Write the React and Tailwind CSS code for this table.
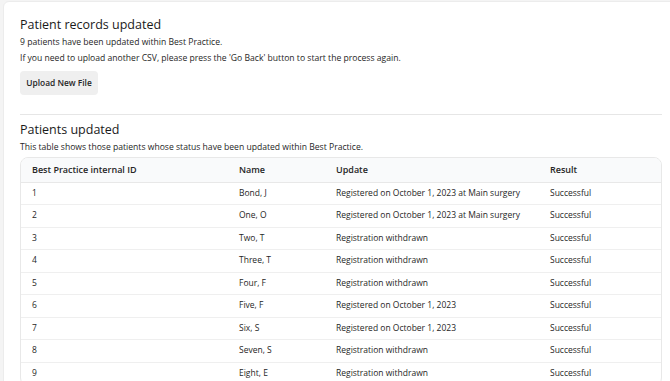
const rows = [
  ["1", "Bond, J", "Registered on October 1, 2023 at Main surgery"],
  ["2", "One, O", "Registered on October 1, 2023 at Main surgery"],
  ["3", "Two, T", "Registration withdrawn"],
  ["4", "Three, T", "Registration withdrawn"],
  ["5", "Four, F", "Registration withdrawn"],
  ["6", "Five, F", "Registered on October 1, 2023"],
  ["7", "Six, S", "Registered on October 1, 2023"],
  ["8", "Seven, S", "Registration withdrawn"],
  ["9", "Eight, E", "Registration withdrawn"],
];

export default function App() {
  return (
    <div
      className="h-[381px] w-full overflow-hidden bg-[#f4f4f4] pl-[3px] pt-[1px] text-[#262626]"
      style={{ fontFamily: '"Open Sans", "Liberation Sans", sans-serif' }}
    >
      <div className="w-[676px] rounded-tl-md border border-[#ececec] bg-white px-4 pt-[15px] pb-4">
        {/* Result summary */}
        <h1 className="text-[12.5px] leading-4 font-medium text-[#1a1a1a]">
          Patient records updated
        </h1>
        <p className="mt-[3px] text-[8.6px] leading-3">
          9 patients have been updated within Best Practice.
        </p>
        <p className="mt-[4px] text-[8.6px] leading-3">
          If you need to upload another CSV, please press the 'Go Back' button
          to start the process again.
        </p>
        <button className="mt-[7px] h-6 w-[78px] rounded-[4px] bg-[#efefef] text-[8.4px] font-semibold text-[#262626]">
          Upload New File
        </button>

        <div className="mt-[19px] border-t border-[#e6e6e6]" />

        {/* Patients table */}
        <h2 className="mt-[7px] text-[12.5px] leading-4 font-medium text-[#1a1a1a]">
          Patients updated
        </h2>
        <p className="mt-[3px] text-[8.6px] leading-3">
          This table shows those patients whose status have been updated within
          Best Practice.
        </p>
        <div className="mt-[4px] overflow-hidden rounded-lg border border-[#e8e8e8]">
          <table className="w-full table-fixed border-collapse text-left text-[8.5px]">
            <colgroup>
              <col className="w-[207px]" />
              <col className="w-[97px]" />
              <col className="w-[214px]" />
              <col />
            </colgroup>
            <thead className="bg-[#f9fafb]">
              <tr className="h-6 border-b border-[#e8e8e8] text-[9px]">
                <th className="pl-[11px] font-semibold">Best Practice internal ID</th>
                <th className="pl-[11px] font-semibold">Name</th>
                <th className="pl-[11px] font-semibold">Update</th>
                <th className="pl-[11px] font-semibold">Result</th>
              </tr>
            </thead>
            <tbody>
              {rows.map(([id, name, update]) => (
                <tr key={id} className="h-[22.5px] border-b border-[#efefef]">
                  <td className="pl-[11px]">{id}</td>
                  <td className="pl-[11px]">{name}</td>
                  <td className="pl-[11px]">{update}</td>
                  <td className="pl-[11px]">Successful</td>
                </tr>
              ))}
            </tbody>
          </table>
        </div>
      </div>
    </div>
  );
}
